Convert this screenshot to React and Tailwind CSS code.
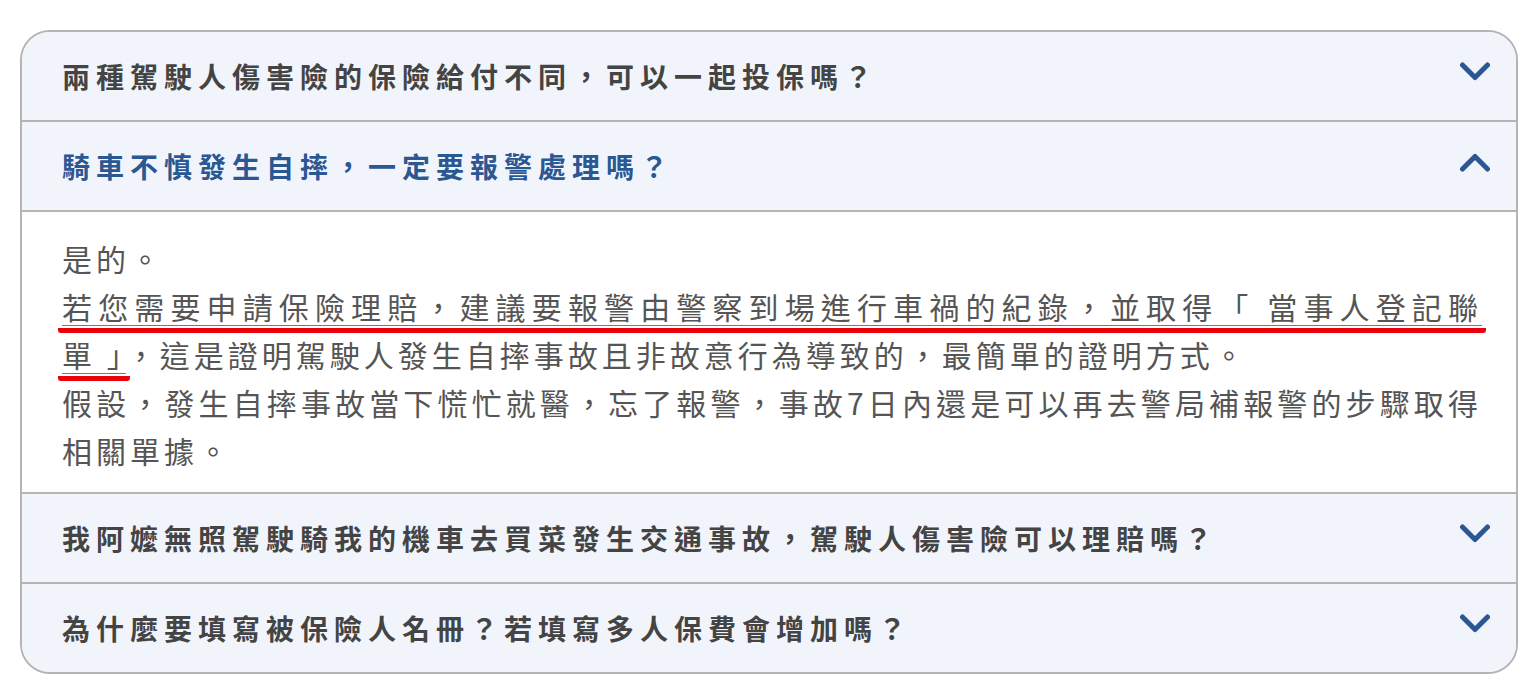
import React, { useState } from 'react';

const faqs = [
    { q: '兩種駕駛人傷害險的保險給付不同，可以一起投保嗎？' },
    { q: '騎車不慎發生自摔，一定要報警處理嗎？' },
    { q: '我阿嬤無照駕駛騎我的機車去買菜發生交通事故，駕駛人傷害險可以理賠嗎？' },
    { q: '為什麼要填寫被保險人名冊？若填寫多人保費會增加嗎？' },
];

const Chevron = ({ up }) => (
    <svg width="32" height="20" viewBox="0 0 32 20" className={`shrink-0 -mt-2 ${up ? 'rotate-180' : ''}`}>
        <path d="M3.5 3 L16 15.5 L28.5 3" fill="none" stroke="#2b5793" strokeWidth="5" strokeLinecap="round" strokeLinejoin="round" />
    </svg>
);

const Answer = () => (
    <div className="bg-white border-t-2 border-[#b4b4b4] pl-[40px] pr-[34px] pt-[22px] pb-[18px] text-[30px] leading-[48px] tracking-[4px] text-[#555] font-normal text-justify">
        <p>是的。</p>
        <p>
            <span className="underline decoration-[#777] decoration-1 underline-offset-[6px] border-b-[5px] border-[#e8000b] rounded-[3px] -mx-[4px] px-[4px] box-decoration-clone">
                若您需要申請保險理賠，建議要報警由警察到場進行車禍的紀錄，並取得「 當事人登記聯單{'\u00a0'}」
            </span>
            ，這是證明駕駛人發生自摔事故且非故意行為導致的，最簡單的證明方式。
        </p>
        <p>假設，發生自摔事故當下慌忙就醫，忘了報警，事故7日內還是可以再去警局補報警的步驟取得相關單據。</p>
    </div>
);

const App = () => {
    const [openIdx, setOpenIdx] = useState(1);

    return (
        <div className="min-h-screen bg-white pt-[30px] pl-[20px]" style={{ fontFamily: '"Noto Sans CJK TC", "Noto Sans", sans-serif' }}>
            <div className="w-[1498px] border-2 border-[#b4b4b4] rounded-[30px] overflow-hidden">
                {faqs.map((f, i) => (
                    <div key={i} className={i > 0 ? 'border-t-2 border-[#b4b4b4]' : ''}>
                        <button
                            onClick={() => setOpenIdx(openIdx === i ? -1 : i)}
                            className="w-full h-[88px] flex items-center justify-between bg-[#f1f5fb] pl-[40px] pr-[25px] text-left"
                        >
                            <span className={`text-[28px] font-bold tracking-[6px] ${openIdx === i ? 'text-[#2b5793]' : 'text-[#444]'}`}>{f.q}</span>
                            <Chevron up={openIdx === i} />
                        </button>
                        {openIdx === i && <Answer />}
                    </div>
                ))}
            </div>
        </div>
    );
};

export default App;
